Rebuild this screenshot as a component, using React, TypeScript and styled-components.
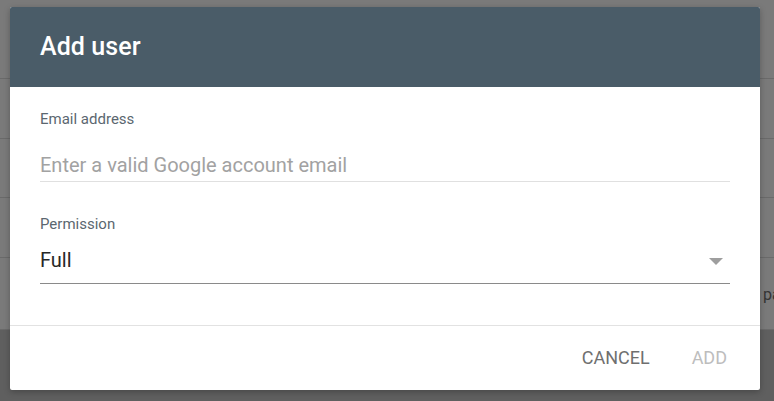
import React from "react";
import styled, { createGlobalStyle } from "styled-components";

const Global = createGlobalStyle`
  html, body { margin: 0; padding: 0; }
  body {
    width: 774px;
    height: 401px;
    overflow: hidden;
    font-family: Roboto, "Noto Sans", Arial, sans-serif;
    background: #ffffff;
  }
`;

const Page = styled.div`
  position: relative;
  width: 774px;
  height: 401px;
  overflow: hidden;
  display: flex;
  flex-direction: column;
  background: #ffffff;
`;

const PageRow = styled.div<{ $h: number }>`
  height: ${(p) => p.$h}px;
  flex: none;
  border-bottom: 1px solid #dedede;
  display: flex;
  align-items: center;
  justify-content: flex-end;
  font-size: 16px;
  color: #707070;
`;

const PageFooter = styled.div`
  flex: 1;
  background: #c6c6c6;
`;

const RowText = styled.span`
  width: 11px;
  overflow: hidden;
  white-space: nowrap;
  padding-top: 2px;
`;

const Scrim = styled.div`
  position: absolute;
  inset: 0;
  background: rgba(0, 0, 0, 0.52);
`;

const Dialog = styled.div`
  position: absolute;
  left: 10px;
  top: 7px;
  width: 750px;
  height: 383px;
  background: #ffffff;
  border-radius: 2px;
  overflow: hidden;
  display: flex;
  flex-direction: column;
  box-shadow: 0 2px 6px rgba(0, 0, 0, 0.25);
`;

const Header = styled.div`
  height: 80px;
  flex: none;
  background: #4a5c68;
  display: flex;
  align-items: center;
  padding: 0 30px;
`;

const Title = styled.h2`
  margin: 0;
  padding-bottom: 2px;
  font-size: 25px;
  font-weight: 500;
  color: #ffffff;
  letter-spacing: 0.1px;
`;

const Body = styled.div`
  height: 238px;
  flex: none;
  box-sizing: border-box;
  padding: 24px 30px 0;
  display: flex;
  flex-direction: column;
`;

const Label = styled.div`
  font-size: 15px;
  line-height: 16px;
  color: #5b6770;
`;

const Field = styled.div<{ $gap: number; $line: string; $pad: number }>`
  margin-top: ${(p) => p.$gap}px;
  padding-bottom: ${(p) => p.$pad}px;
  border-bottom: 1px solid ${(p) => p.$line};
  display: flex;
  align-items: center;
  justify-content: space-between;
`;

const Input = styled.div<{ $muted?: boolean }>`
  font-size: 20px;
  line-height: 24px;
  color: ${(p) => (p.$muted ? "#a2a2a2" : "#262626")};
`;

const Arrow = styled.div`
  width: 0;
  height: 0;
  margin-right: 7px;
  margin-top: 3px;
  border-left: 7px solid transparent;
  border-right: 7px solid transparent;
  border-top: 7px solid #9e9e9e;
`;

const Section = styled.div<{ $top: number }>`
  margin-top: ${(p) => p.$top}px;
  display: flex;
  flex-direction: column;
`;

const Footer = styled.div`
  flex: 1;
  border-top: 1px solid #e2e2e2;
  display: flex;
  align-items: center;
  justify-content: flex-end;
  gap: 42px;
  padding: 0 33px 2px 0;
`;

const Button = styled.button<{ $disabled?: boolean }>`
  border: none;
  background: none;
  padding: 0;
  font-family: inherit;
  font-size: 18px;
  font-weight: 400;
  text-transform: uppercase;
  color: ${(p) => (p.$disabled ? "#bdbdbd" : "#6f6f6f")};
  cursor: pointer;
`;

export default function App() {
  return (
    <>
      <Global />
      <Page>
        <PageRow $h={78} />
        <PageRow $h={59} />
        <PageRow $h={58} />
        <PageRow $h={59} />
        <PageRow $h={71}>
          <RowText>pa</RowText>
        </PageRow>
        <PageFooter />
        <Scrim />
        <Dialog>
          <Header>
            <Title>Add user</Title>
          </Header>
          <Body>
            <Section $top={0}>
              <Label>Email address</Label>
              <Field $gap={26} $line="#e0e0e0" $pad={4}>
                <Input $muted>Enter a valid Google account email</Input>
              </Field>
            </Section>
            <Section $top={34}>
              <Label>Permission</Label>
              <Field $gap={16} $line="#8a8a8a" $pad={11}>
                <Input>Full</Input>
                <Arrow />
              </Field>
            </Section>
          </Body>
          <Footer>
            <Button>Cancel</Button>
            <Button $disabled>Add</Button>
          </Footer>
        </Dialog>
      </Page>
    </>
  );
}
